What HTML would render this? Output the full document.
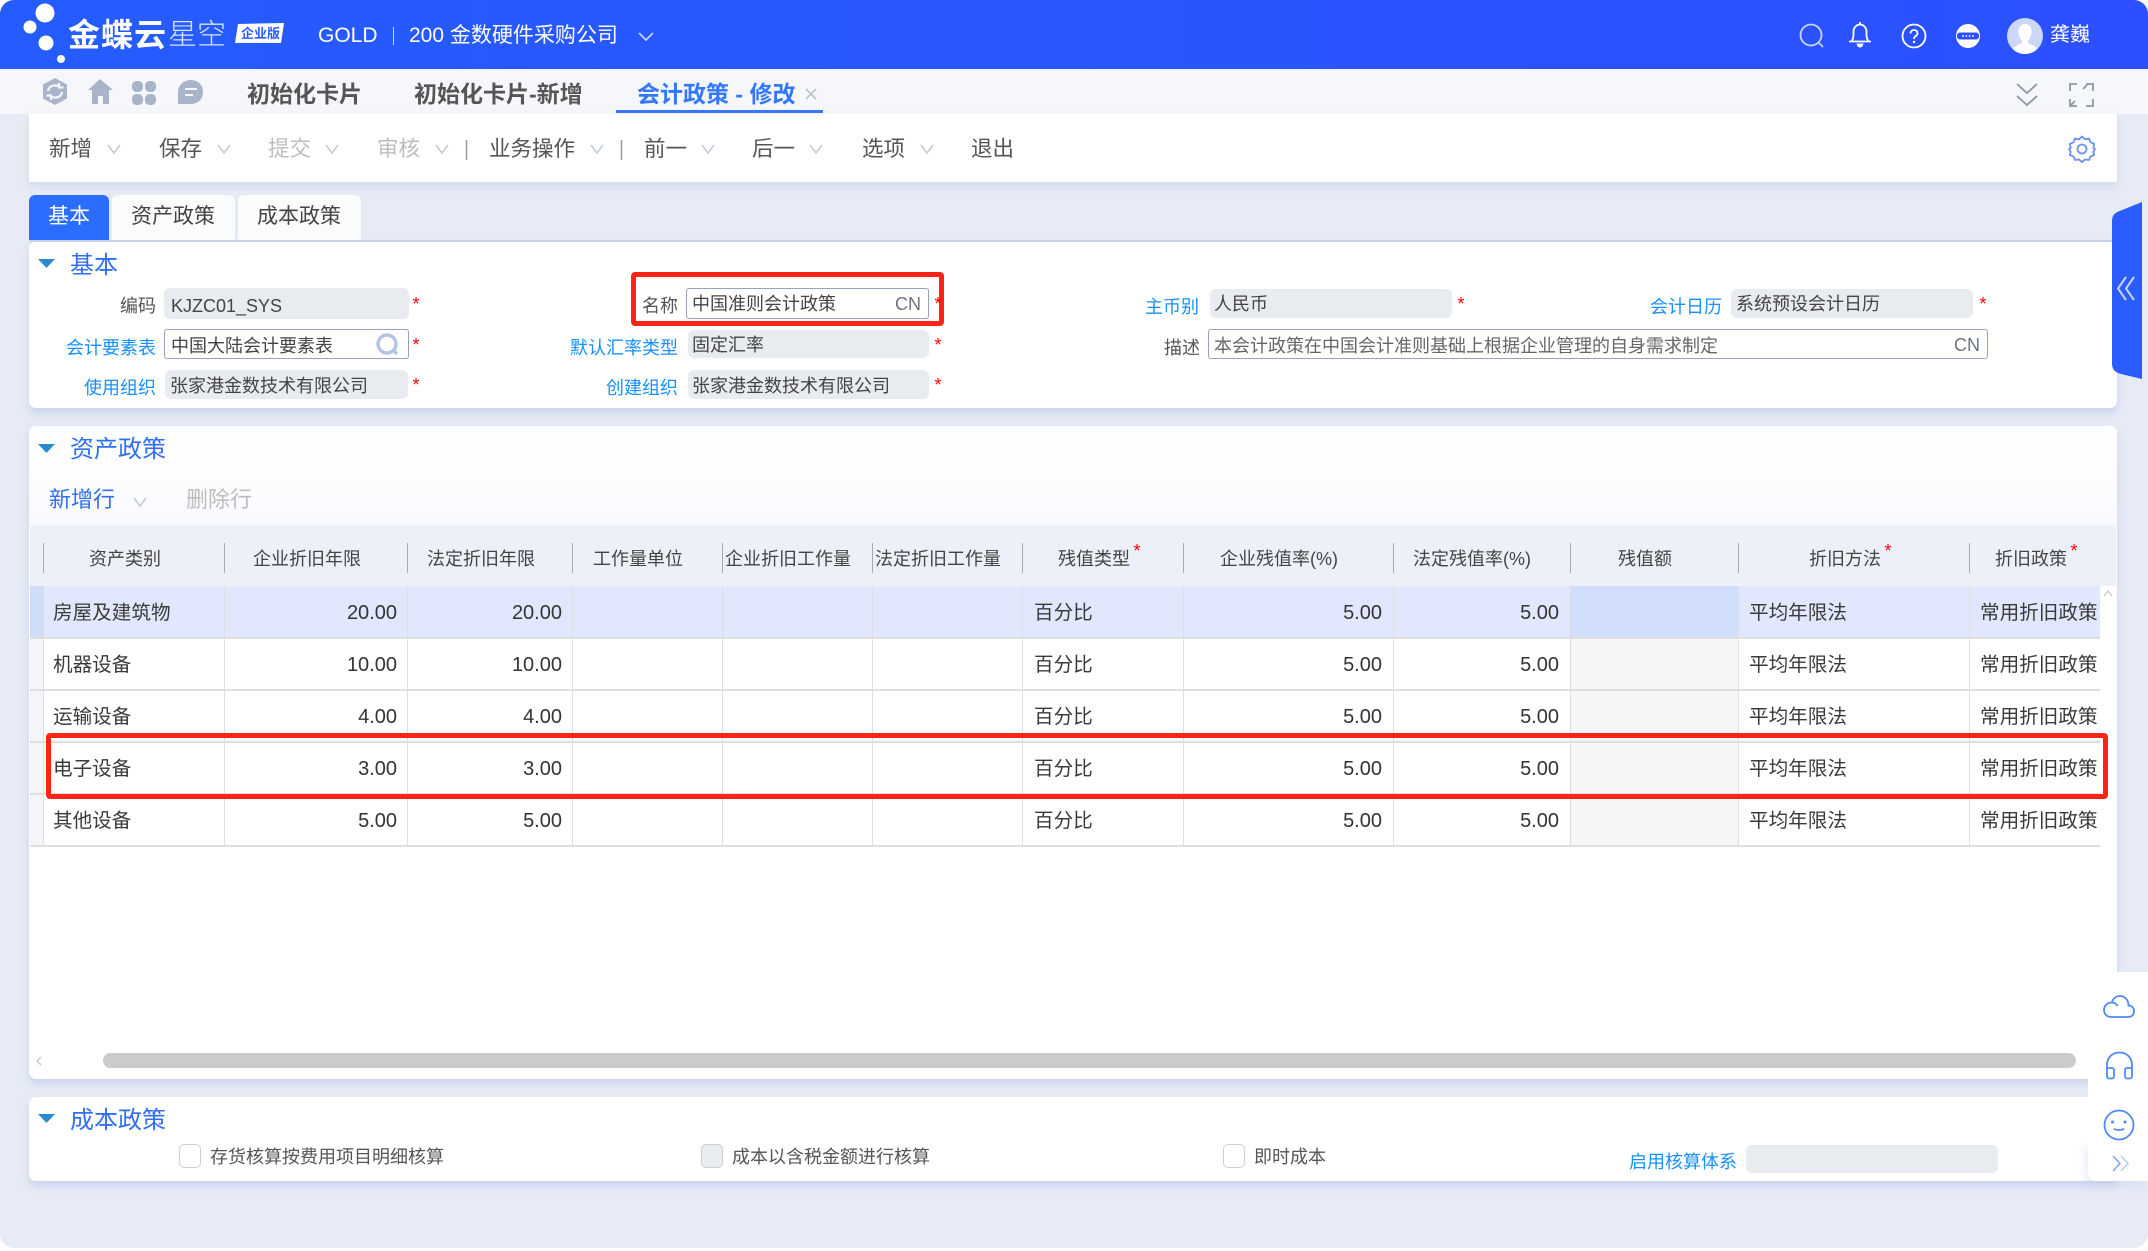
<!DOCTYPE html>
<html lang="zh-CN"><head><meta charset="utf-8"><title>会计政策 - 修改</title>
<style>
*{box-sizing:border-box;margin:0;padding:0}
html,body{width:2148px;height:1251px;overflow:hidden;background:#fff}
body{position:relative;font-family:"Liberation Sans","Noto Sans CJK SC",sans-serif;color:#444}
.a{position:absolute}
.t{position:absolute;white-space:nowrap;height:30px;line-height:30px;font-size:18px;margin-top:1px}
.r{text-align:right;left:0}
.c{text-align:center;width:200px}
.lb{color:#1890ff}
.ld{color:#555}
.f{position:absolute;background:#e8ebf0;border-radius:6px}
.fw{position:absolute;background:#fff;border:1.5px solid #97a3bd;border-radius:3px}
.s{position:absolute;color:#f00;font-size:18px;line-height:18px;height:18px;width:12px;text-align:center;font-family:"Liberation Sans",sans-serif;margin-top:2px}
.tb{font-size:21.5px;color:#555}
.dis{color:#bdbdbd}
.tt{font-size:24px;color:#2f6ff5;margin-top:2px}
.h{font-size:18px;color:#444}
.sep{position:absolute;top:543px;width:1px;height:30px;background:#a9a9a9}
.vl{position:absolute;top:586px;width:1px;height:259px;background:#dedede}
.hl{position:absolute;left:30px;width:2070px;height:2px;background:#dfdfdf}
.d{font-size:19.6px;color:#3a3a3a}
.n{font-size:20px;color:#333}
.panel{position:absolute;left:29px;width:2088px;background:#fff;border-radius:7px;box-shadow:0 5px 8px rgba(175,193,232,.55)}
.cb{position:absolute;width:22px;height:24px;top:1144px;border:1.5px solid #cfcfcf;border-radius:5px;background:#fff}
svg{position:absolute;overflow:visible}
</style></head><body>

<div class="a" id="frame" style="left:0;top:0;width:2148px;height:1248px;background:#e7ebf6;border-radius:14px;overflow:hidden">

<!-- header -->
<div class="a" style="left:0;top:0;width:2148px;height:69px;background:linear-gradient(90deg,#255cff,#2c50ff)"></div>
<svg style="left:0;top:0" width="300" height="69"><g fill="#fff"><circle cx="45" cy="13" r="9.5"/><circle cx="30" cy="27" r="6.5"/><circle cx="46" cy="43" r="7.5"/><circle cx="61" cy="59" r="4"/><path d="M238 24 284 23 281 43 235 43Z"/></g></svg>
<div class="t" style="left:68px;top:19px;font-size:32px;font-weight:700;color:#fff;letter-spacing:1px">金蝶云</div>
<div class="t" style="left:168px;top:19px;font-size:29px;font-weight:300;color:#d8e2ff">星空</div>
<div class="t" style="left:241px;top:18px;font-size:13px;font-weight:700;color:#2a5cff">企业版</div>
<div class="t" style="left:318px;top:20px;font-size:21px;color:#fff">GOLD</div>
<div class="a" style="left:393px;top:27px;width:1px;height:18px;background:#c7d4ff"></div>
<div class="t" style="left:409px;top:20px;font-size:21px;color:#fff">200 金数硬件采购公司</div>
<svg style="left:638px;top:32px" width="16" height="10" fill="none" stroke="#c5d2ff" stroke-width="1.8"><path d="M1 1 8 8 15 1"/></svg>
<svg style="left:1798px;top:22px" width="28" height="28" fill="none" stroke="#c8d4ff" stroke-width="1.8"><circle cx="13" cy="13" r="10.5"/><path d="M21 21 25 25"/></svg>
<svg style="left:1847px;top:21px" width="26" height="28" fill="none" stroke="#fff" stroke-width="1.8"><path d="M2 20.5H24M4.5 20.5C6.5 18 6.5 15 6.5 11 6.5 6.5 9.5 3.5 13 3.5S19.5 6.5 19.5 11C19.500 15 19.500 18 21.500 20.500M13 1V3.500"/><path d="M9.500 22.500H16.500C16 25.500 14.500 26.500 13 26.500S10 25.500 9.500 22.500Z" fill="#fff" stroke="none"/></svg>
<svg style="left:1901px;top:23px" width="26" height="26" fill="none" stroke="#fff" stroke-width="1.8"><circle cx="13" cy="13" r="11.500"/><path d="M9.500 10.500C9.500 8.300 11 7 13 7S16.500 8.300 16.500 10.200C16.500 13 13 13 13 16"/><circle cx="13" cy="19" r="1.200" fill="#fff" stroke="none"/></svg>
<svg style="left:1956px;top:24px" width="24" height="24"><circle cx="12" cy="12" r="12" fill="#fff"/><rect x="1" y="8.500" width="22" height="7" rx="3" fill="#2c50ff"/><g fill="#fff"><circle cx="7" cy="12" r=".9"/><circle cx="10.300" cy="12" r=".9"/><circle cx="13.600" cy="12" r=".9"/><circle cx="17" cy="12" r=".9"/></g></svg>
<svg style="left:2007px;top:18px" width="36" height="36"><circle cx="18" cy="18" r="18" fill="#cbd8fa"/><path d="M18 6C13.500 6 11.500 10 11.500 14 11.500 18 13.500 21 15 22.500V25C12 27 8 27.500 6 31 9 34.500 13.500 36 18 36S27 34.500 30 31C28 27.500 24 27 21 25V22.500C22.500 21 24.500 18 24.500 14 24.500 10 22.500 6 18 6Z" fill="#fff"/></svg>
<div class="t" style="left:2050px;top:19px;font-size:20px;color:#fff">龚巍</div>

<!-- tabs row -->
<div class="a" style="left:0;top:69px;width:2148px;height:45px;background:#f5f7fb"></div>
<svg style="left:43px;top:78px" width="160" height="30"><g fill="#a9b4c8"><path d="M12 0 24 6.500V20.500L12 27 0 20.500V6.500Z"/><path d="M57 1 45 12H49V26H55V18H60V26H66V12H70L57 1Z"/><rect x="89" y="3" width="11" height="11" rx="4.500"/><rect x="102" y="3" width="11" height="11" rx="4.500"/><rect x="89" y="16" width="11" height="11" rx="4.500"/><rect x="102" y="16" width="11" height="11" rx="4.500"/><path d="M148 2C155 2 160 7 160 14S155 26 148 26H135V14C135 7 141 2 148 2Z"/></g><path d="M5 13C6 8 11 6 16 8.500M19 14C18 19 13 21 8 18.500M16 5V9.500H20.500M8 22V17.500H3.500" fill="none" stroke="#f5f7fb" stroke-width="2.200"/><path d="M142 11H154M142 17H150" stroke="#f5f7fb" stroke-width="2"/></svg>
<div class="t" style="left:247px;top:78px;font-size:23px;font-weight:700;color:#555">初始化卡片</div>
<div class="t" style="left:414px;top:78px;font-size:23px;font-weight:700;color:#555">初始化卡片-新增</div>
<div class="t" style="left:637px;top:78px;font-size:23px;font-weight:700;color:#3377ff">会计政策 - 修改</div>
<svg style="left:805px;top:88px" width="12" height="12" stroke="#b3b9c6" stroke-width="1.400"><path d="M1 1 11 11M11 1 1 11"/></svg>
<div class="a" style="left:616px;top:110px;width:207px;height:3px;background:#3377ff"></div>
<svg style="left:2016px;top:82px" width="22" height="25" fill="none" stroke="#8e96a8" stroke-width="1.800"><path d="M1 2 11 11 21 2M1 14 11 23 21 14"/></svg>
<svg style="left:2069px;top:83px" width="25" height="24" fill="none" stroke="#8e96a8" stroke-width="1.800"><path d="M1 8V1H8M17 1H24V8M24 16V23H17M8 23H1V16M18 2 14 6M2 22 6 18"/></svg>

<!-- toolbar -->
<div class="a" style="left:29px;top:114px;width:2088px;height:68px;background:#fff;box-shadow:0 4px 7px rgba(190,202,230,.5)"></div>
<div class="t tb" style="left:49px;top:133px">新增</div>
<div class="t tb" style="left:159px;top:133px">保存</div>
<div class="t tb dis" style="left:268px;top:133px">提交</div>
<div class="t tb dis" style="left:377px;top:133px">审核</div>
<div class="t tb" style="left:489px;top:133px">业务操作</div>
<div class="t tb" style="left:644px;top:133px">前一</div>
<div class="t tb" style="left:752px;top:133px">后一</div>
<div class="t tb" style="left:862px;top:133px">选项</div>
<div class="t tb" style="left:971px;top:133px">退出</div>
<svg style="left:0;top:140px" width="1000" height="22" fill="none" stroke="#c3c8d6" stroke-width="1.500"><path d="M108 5 114 13 120 5M218 5 224 13 230 5M326 5 332 13 338 5M436 5 442 13 448 5M591 5 597 13 603 5M702 5 708 13 714 5M810 5 816 13 822 5M921 5 927 13 933 5"/><path d="M466.500 0V20M621.500 0V20" stroke="#999"/></svg>
<svg style="left:2068px;top:135px" width="28" height="28" fill="none" stroke="#6b93f5" stroke-width="1.800"><path d="M14 1.500 17 4.300 21 3.500 22.500 7.300 26.200 8.800 25.300 13 27 14 25.300 17 26.200 20 22.500 21.500 21 25 17 24.500 14 27 11 24.500 7 25 5.500 21.500 1.800 20 2.700 17 1 14 2.700 13 1.800 8.800 5.500 7.300 7 3.500 11 4.300Z" stroke-linejoin="round"/><circle cx="14" cy="14" r="4.500"/></svg>

<!-- bill tabs -->
<div class="a" style="left:29px;top:195px;width:80px;height:46px;background:#2a6dff;border-radius:6px 6px 0 0"></div>
<div class="a" style="left:112px;top:195px;width:123px;height:45px;background:#fafbfd;border-radius:6px 6px 0 0"></div>
<div class="a" style="left:238px;top:195px;width:123px;height:45px;background:#fafbfd;border-radius:6px 6px 0 0"></div>
<div class="t" style="left:48px;top:201px;font-size:21px;color:#fff">基本</div>
<div class="t" style="left:131px;top:201px;font-size:21px;color:#444">资产政策</div>
<div class="t" style="left:257px;top:201px;font-size:21px;color:#444">成本政策</div>

<!-- basic panel -->
<div class="a" style="left:29px;top:240px;width:2088px;height:2px;background:#c8d4ee"></div>
<div class="panel" style="top:242px;height:166px"></div>
<svg style="left:38px;top:259px" width="17" height="9"><path d="M0 0H17L8.500 9Z" fill="#2a8ad0"/></svg>
<div class="t tt" style="left:70px;top:249px">基本</div>

<div class="t r ld" style="width:156px;top:290px">编码</div>
<div class="f" style="left:164px;top:288px;width:245px;height:31px"></div>
<div class="t" style="left:171px;top:290px;color:#444">KJZC01_SYS</div>
<div class="s" style="left:410px;top:293px">*</div>

<div class="t r lb" style="width:156px;top:332px">会计要素表</div>
<div class="fw" style="left:164px;top:329px;width:245px;height:30px"></div>
<div class="t" style="left:171px;top:330px">中国大陆会计要素表</div>
<svg style="left:376px;top:333px" width="24" height="24" fill="none" stroke="#b5c4e0" stroke-width="3.400"><circle cx="11" cy="11" r="9"/><path d="M17 17 21 21"/></svg>
<div class="s" style="left:410px;top:334px">*</div>

<div class="t r lb" style="width:156px;top:372px">使用组织</div>
<div class="f" style="left:165px;top:370px;width:243px;height:29px"></div>
<div class="t" style="left:170px;top:370px">张家港金数技术有限公司</div>
<div class="s" style="left:410px;top:374px">*</div>

<div class="t r ld" style="width:678px;top:290px">名称</div>
<div class="fw" style="left:686px;top:288px;width:243px;height:31px"></div>
<div class="t" style="left:692px;top:288px">中国准则会计政策</div>
<div class="t" style="left:895px;top:288px;color:#6e7480;font-size:18px">CN</div>
<div class="a" style="left:631px;top:272px;width:313px;height:54px;border:5px solid #ff2416;border-radius:4px"></div>
<div class="s" style="left:932px;top:293px">*</div>

<div class="t r lb" style="width:678px;top:332px">默认汇率类型</div>
<div class="f" style="left:688px;top:330px;width:241px;height:28px"></div>
<div class="t" style="left:692px;top:329px">固定汇率</div>
<div class="s" style="left:932px;top:334px">*</div>

<div class="t r lb" style="width:678px;top:372px">创建组织</div>
<div class="f" style="left:688px;top:370px;width:241px;height:29px"></div>
<div class="t" style="left:692px;top:370px">张家港金数技术有限公司</div>
<div class="s" style="left:932px;top:374px">*</div>

<div class="t r lb" style="width:1199px;top:291px">主币别</div>
<div class="f" style="left:1210px;top:289px;width:242px;height:29px"></div>
<div class="t" style="left:1214px;top:288px">人民币</div>
<div class="s" style="left:1455px;top:293px">*</div>

<div class="t r lb" style="width:1722px;top:291px">会计日历</div>
<div class="f" style="left:1731px;top:289px;width:242px;height:29px"></div>
<div class="t" style="left:1736px;top:288px">系统预设会计日历</div>
<div class="s" style="left:1977px;top:293px">*</div>

<div class="t r ld" style="width:1200px;top:332px">描述</div>
<div class="fw" style="left:1208px;top:329px;width:780px;height:30px"></div>
<div class="t" style="left:1214px;top:330px;color:#666">本会计政策在中国会计准则基础上根据企业管理的自身需求制定</div>
<div class="t" style="left:1954px;top:329px;color:#6e7480">CN</div>

<!-- asset panel -->
<div class="panel" style="top:426px;height:653px"></div>
<div class="a" style="left:29px;top:426px;width:2088px;height:99px;background:linear-gradient(#fff,#f9fafe);border-radius:7px 7px 0 0"></div>
<svg style="left:38px;top:444px" width="17" height="9"><path d="M0 0H17L8.500 9Z" fill="#2a8ad0"/></svg>
<div class="t tt" style="left:70px;top:433px">资产政策</div>
<div class="t" style="left:49px;top:484px;font-size:22px;color:#2f6ff5">新增行</div>
<svg style="left:133px;top:497px" width="14" height="10" fill="none" stroke="#c3c8d6" stroke-width="1.500"><path d="M1 1 7 9 13 1"/></svg>
<div class="t dis" style="left:186px;top:484px;font-size:22px">删除行</div>

<div class="a" style="left:30px;top:525px;width:2086px;height:61px;background:#edf0f9"></div>
<div class="sep" style="left:43px"></div><div class="sep" style="left:224px"></div><div class="sep" style="left:407px"></div><div class="sep" style="left:572px"></div><div class="sep" style="left:722px"></div><div class="sep" style="left:872px"></div><div class="sep" style="left:1022px"></div><div class="sep" style="left:1183px"></div><div class="sep" style="left:1393px"></div><div class="sep" style="left:1570px"></div><div class="sep" style="left:1738px"></div><div class="sep" style="left:1969px"></div>
<div class="t c h" style="left:25px;top:543px">资产类别</div>
<div class="t c h" style="left:207px;top:543px">企业折旧年限</div>
<div class="t c h" style="left:381px;top:543px">法定折旧年限</div>
<div class="t c h" style="left:538px;top:543px">工作量单位</div>
<div class="t c h" style="left:688px;top:543px">企业折旧工作量</div>
<div class="t c h" style="left:838px;top:543px">法定折旧工作量</div>
<div class="t c h" style="left:994px;top:543px">残值类型</div>
<div class="t c h" style="left:1179px;top:543px">企业残值率(%)</div>
<div class="t c h" style="left:1372px;top:543px">法定残值率(%)</div>
<div class="t c h" style="left:1545px;top:543px">残值额</div>
<div class="t c h" style="left:1745px;top:543px">折旧方法</div>
<div class="t c h" style="left:1931px;top:543px">折旧政策</div>
<div class="s" style="left:1131px;top:540px">*</div><div class="s" style="left:1882px;top:540px">*</div><div class="s" style="left:2068px;top:540px">*</div>

<!-- rows -->
<div class="a" style="left:30px;top:586px;width:2070px;height:51px;background:#e1e8fd"></div>
<div class="a" style="left:30px;top:586px;width:13px;height:51px;background:#cfdcfa"></div>
<div class="a" style="left:30px;top:638px;width:13px;height:207px;background:#f3f5f9"></div>
<div class="a" style="left:1571px;top:586px;width:167px;height:51px;background:#d1defc"></div>
<div class="a" style="left:1571px;top:638px;width:167px;height:207px;background:#f5f6f8"></div>
<div class="hl" style="top:637px"></div><div class="hl" style="top:689px"></div><div class="hl" style="top:741px"></div><div class="hl" style="top:793px"></div><div class="hl" style="top:845px"></div>
<div class="vl" style="left:43px"></div><div class="vl" style="left:224px"></div><div class="vl" style="left:407px"></div><div class="vl" style="left:572px"></div><div class="vl" style="left:722px"></div><div class="vl" style="left:872px"></div><div class="vl" style="left:1022px"></div><div class="vl" style="left:1183px"></div><div class="vl" style="left:1393px"></div><div class="vl" style="left:1570px"></div><div class="vl" style="left:1738px"></div><div class="vl" style="left:1969px"></div>

<div class="t d" style="left:53px;top:597px">房屋及建筑物</div>
<div class="t r n" style="width:397px;top:597px">20.00</div><div class="t r n" style="width:562px;top:597px">20.00</div>
<div class="t d" style="left:1034px;top:597px">百分比</div>
<div class="t r n" style="width:1382px;top:597px">5.00</div><div class="t r n" style="width:1559px;top:597px">5.00</div>
<div class="t d" style="left:1749px;top:597px">平均年限法</div><div class="t d" style="left:1980px;top:597px">常用折旧政策</div>

<div class="t d" style="left:53px;top:649px">机器设备</div>
<div class="t r n" style="width:397px;top:649px">10.00</div><div class="t r n" style="width:562px;top:649px">10.00</div>
<div class="t d" style="left:1034px;top:649px">百分比</div>
<div class="t r n" style="width:1382px;top:649px">5.00</div><div class="t r n" style="width:1559px;top:649px">5.00</div>
<div class="t d" style="left:1749px;top:649px">平均年限法</div><div class="t d" style="left:1980px;top:649px">常用折旧政策</div>

<div class="t d" style="left:53px;top:701px">运输设备</div>
<div class="t r n" style="width:397px;top:701px">4.00</div><div class="t r n" style="width:562px;top:701px">4.00</div>
<div class="t d" style="left:1034px;top:701px">百分比</div>
<div class="t r n" style="width:1382px;top:701px">5.00</div><div class="t r n" style="width:1559px;top:701px">5.00</div>
<div class="t d" style="left:1749px;top:701px">平均年限法</div><div class="t d" style="left:1980px;top:701px">常用折旧政策</div>

<div class="t d" style="left:53px;top:753px">电子设备</div>
<div class="t r n" style="width:397px;top:753px">3.00</div><div class="t r n" style="width:562px;top:753px">3.00</div>
<div class="t d" style="left:1034px;top:753px">百分比</div>
<div class="t r n" style="width:1382px;top:753px">5.00</div><div class="t r n" style="width:1559px;top:753px">5.00</div>
<div class="t d" style="left:1749px;top:753px">平均年限法</div><div class="t d" style="left:1980px;top:753px">常用折旧政策</div>

<div class="t d" style="left:53px;top:805px">其他设备</div>
<div class="t r n" style="width:397px;top:805px">5.00</div><div class="t r n" style="width:562px;top:805px">5.00</div>
<div class="t d" style="left:1034px;top:805px">百分比</div>
<div class="t r n" style="width:1382px;top:805px">5.00</div><div class="t r n" style="width:1559px;top:805px">5.00</div>
<div class="t d" style="left:1749px;top:805px">平均年限法</div><div class="t d" style="left:1980px;top:805px">常用折旧政策</div>

<div class="a" style="left:46px;top:733px;width:2062px;height:66px;border:5px solid #ff2416;border-radius:4px"></div>
<svg style="left:2103px;top:590px" width="10" height="7" fill="none" stroke="#c8c8c8" stroke-width="1.300"><path d="M1 6 5 1 9 6"/></svg>

<div class="a" style="left:103px;top:1053px;width:1973px;height:15px;background:#cbcbcb;border-radius:8px"></div>
<svg style="left:35px;top:1056px" width="8" height="10" fill="none" stroke="#c4c4c4" stroke-width="1.300"><path d="M6 1 2 5 6 9"/></svg>

<!-- cost panel -->
<div class="panel" style="top:1097px;height:84px"></div>
<svg style="left:38px;top:1114px" width="17" height="9"><path d="M0 0H17L8.500 9Z" fill="#2a8ad0"/></svg>
<div class="t tt" style="left:70px;top:1104px">成本政策</div>
<div class="cb" style="left:179px"></div>
<div class="t ld" style="left:210px;top:1141px">存货核算按费用项目明细核算</div>
<div class="cb" style="left:701px;background:#e8ebf0"></div>
<div class="t ld" style="left:732px;top:1141px">成本以含税金额进行核算</div>
<div class="cb" style="left:1223px"></div>
<div class="t ld" style="left:1254px;top:1141px">即时成本</div>
<div class="t r lb" style="width:1737px;top:1146px">启用核算体系</div>
<div class="f" style="left:1746px;top:1145px;width:252px;height:28px"></div>

<!-- right helper -->
<div class="a" style="left:2088px;top:1140px;width:60px;height:41px;border-radius:0 0 0 8px;box-shadow:-3px 6px 9px rgba(190,202,230,.35)"></div>
<div class="a" style="left:2088px;top:972px;width:60px;height:209px;background:#fff;border-radius:0 0 0 8px"></div>
<svg style="left:2102px;top:994px" width="34" height="26" fill="none" stroke="#4f8af5" stroke-width="1.800"><path d="M9 23H26C30 23 32 20.500 32 17 32 13.500 29.500 11.500 26.500 11.500 26.500 5.500 22.500 2 18 2 14 2 11 4.500 10 8.500 5 8.500 2 12 2 16 2 20 5 23 9 23Z M10 8.500C12.500 8.500 14.500 10 15.500 12"/></svg>
<svg style="left:2105px;top:1051px" width="29" height="29" fill="none" stroke="#4f8af5" stroke-width="1.800"><path d="M2 18V14C2 6.500 7.500 1.500 14.500 1.500S27 6.500 27 14V18"/><rect x="2" y="17" width="7" height="10.500" rx="2"/><rect x="20" y="17" width="7" height="10.500" rx="2"/></svg>
<svg style="left:2103px;top:1109px" width="32" height="32" fill="none" stroke="#4f8af5" stroke-width="1.800"><circle cx="16" cy="16" r="14.500"/><path d="M11 19.500C12.500 21.500 19.500 21.500 21 19.500"/><circle cx="9.500" cy="13" r="1.500" fill="#4f8af5" stroke="none"/><circle cx="22" cy="13" r="1.500" fill="#4f8af5" stroke="none"/></svg>
<svg style="left:2112px;top:1155px" width="18" height="17" fill="none" stroke-width="1.600"><path d="M1 1 8 8.500 1 16" stroke="#82a8f5"/><path d="M9 1 16 8.500 9 16" stroke="#b9cffa"/></svg>

<!-- side handle -->
<svg style="left:2112px;top:202px" width="30" height="177"><path d="M30 0V177L9 172C3 170.500 0 167 0 162V19C0 13 3 10.500 9 8.500Z" fill="#2a5cff"/><path d="M14 75 6 86.500 14 98M22 75 14 86.500 22 98" fill="none" stroke="#c6d6ff" stroke-width="2"/></svg>

</div>
</body></html>
